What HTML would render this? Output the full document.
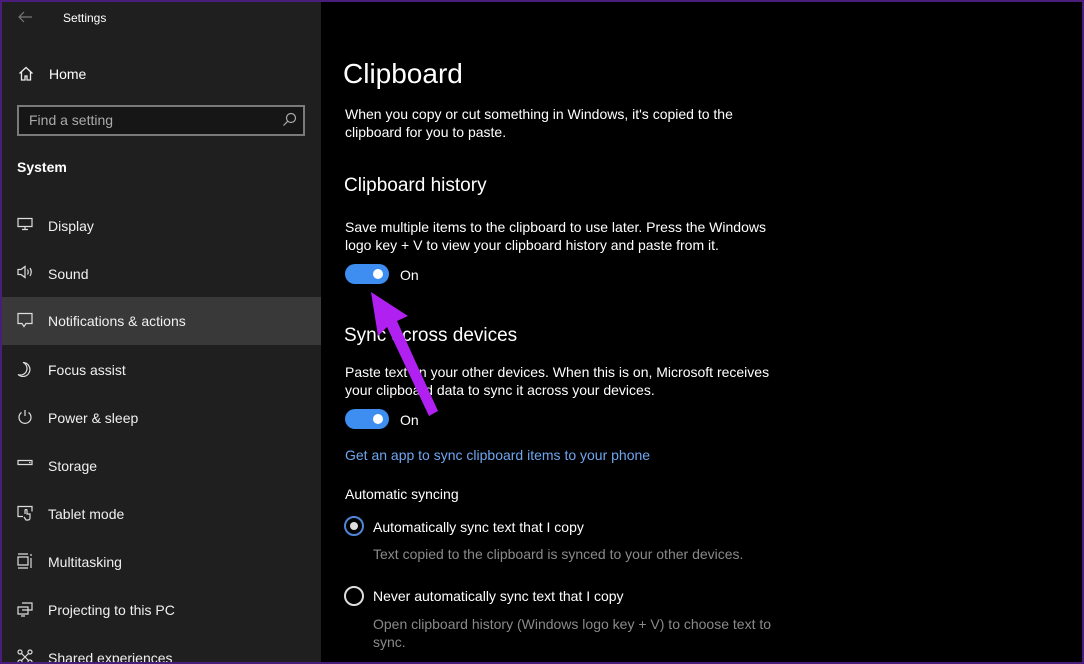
<!DOCTYPE html>
<html><head><meta charset="utf-8"><style>
*{margin:0;padding:0;box-sizing:border-box}
html,body{width:1084px;height:664px;overflow:hidden;background:#000}
body{font-family:"Liberation Sans",sans-serif;color:#fff;position:relative}
.frame{position:absolute;inset:0;border:2px solid #4b1d7a;z-index:10;pointer-events:none}
.side{position:absolute;left:0;top:0;width:321px;height:664px;background:#1f1f1f}
.t{position:absolute;white-space:nowrap}
.nav{position:absolute;left:0;width:321px;height:48px;font-size:14px;color:#f0f0f0}
.nav span{position:absolute;left:48px;top:16px}
.nav svg{position:absolute;left:17px;top:15px}
.sel{background:#393939}
.main .t{font-size:14px;line-height:18px;color:#fff}
.h1{font-size:28px!important;line-height:34px!important}
.h2{font-size:19px!important;line-height:24px!important}
.tog{position:absolute;width:44px;height:20px;border-radius:10px;background:#3d8ef0}
.tog:after{content:"";position:absolute;right:6px;top:5px;width:10px;height:10px;border-radius:50%;background:#fff}
.rad{position:absolute;width:20px;height:20px;border-radius:50%;border:2px solid #ddd}
</style></head><body>
<div class="side">
 <svg class="t" style="left:17px;top:10px" width="16" height="14" viewBox="0 0 16 14" fill="none" stroke="#777" stroke-width="1.2"><path d="M15 7H2M7 2L2 7l5 5"/></svg>
 <div class="t" style="left:63px;top:11px;font-size:12px">Settings</div>
 <svg class="t" style="left:18px;top:66px" width="16" height="15" viewBox="0 0 16 15" fill="none" stroke="#eee" stroke-width="1.3"><path d="M1.5 7.5L8 1.5l6.5 6M3.5 6v8h3.5v-4h2v4h3.5V6"/></svg>
 <div class="t" style="left:49px;top:66px;font-size:14px">Home</div>
 <div class="t" style="left:17px;top:105px;width:288px;height:31px;border:2px solid #7a7a7a;background:#161616"></div>
 <div class="t" style="left:29px;top:112px;font-size:14px;color:#aaa">Find a setting</div>
 <svg class="t" style="left:282px;top:112px" width="15" height="15" viewBox="0 0 15 15" fill="none" stroke="#aaa" stroke-width="1.2"><circle cx="9" cy="6" r="4.5"/><path d="M5.8 9.2L1.5 13.5"/></svg>
 <div class="t" style="left:17px;top:159px;font-size:14px;font-weight:bold">System</div>

 <div class="nav" style="top:202px"><svg width="16" height="14" fill="none" stroke="#ddd" stroke-width="1.2"><path d="M1 1.5h14v8H1zM8 9.5v3M5 12.5h6"/></svg><span>Display</span></div>
 <div class="nav" style="top:250px"><svg width="17" height="14" fill="none" stroke="#ddd" stroke-width="1.2"><path d="M1 4.5h3l4-3v11l-4-3H1zM10.5 4.5q1.5 2.5 0 5M13 3q2.5 4 0 8"/></svg><span>Sound</span></div>
 <div class="nav sel" style="top:297px"><svg width="16" height="16" fill="none" stroke="#ddd" stroke-width="1.2"><path d="M1 1.5h14v10H9l-2 3-2-3H1z"/></svg><span>Notifications &amp; actions</span></div>
 <div class="nav" style="top:346px"><svg width="16" height="16" fill="none" stroke="#ddd" stroke-width="1.2"><path d="M6 1.5a7 7 0 1 1-5 12A6.5 6.5 0 0 0 6 1.5z"/></svg><span>Focus assist</span></div>
 <div class="nav" style="top:394px"><svg width="16" height="16" fill="none" stroke="#ddd" stroke-width="1.2"><path d="M8 1v6M4.5 3.5a6 6 0 1 0 7 0"/></svg><span>Power &amp; sleep</span></div>
 <div class="nav" style="top:442px"><svg width="16" height="14" fill="none" stroke="#ddd" stroke-width="1.2"><path d="M1 3.5h14v4H1zM12 5.5h1.5"/></svg><span>Storage</span></div>
 <div class="nav" style="top:490px"><svg width="16" height="16" fill="none" stroke="#ddd" stroke-width="1.2"><path d="M6 11.5H1V1.5h14v5M8 9v-3.5a1 1 0 0 1 2 0V9h3v4a2 2 0 0 1-2 2H9l-2-3"/></svg><span>Tablet mode</span></div>
 <div class="nav" style="top:538px"><svg width="16" height="16" fill="none" stroke="#ddd" stroke-width="1.2"><path d="M1 1h10M1 15h10M1 4h10v8H1zM14 1v2M14 5v10"/></svg><span>Multitasking</span></div>
 <div class="nav" style="top:586px"><svg width="16" height="16" fill="none" stroke="#ddd" stroke-width="1.2"><path d="M5 2h10v7H5M1 6h10v7H1zM4 15h4"/></svg><span>Projecting to this PC</span></div>
 <div class="nav" style="top:634px"><svg width="16" height="16" fill="none" stroke="#ddd" stroke-width="1.2"><circle cx="3" cy="3" r="2"/><circle cx="13" cy="3" r="2"/><circle cx="3" cy="13" r="2"/><circle cx="13" cy="13" r="2"/><path d="M4.5 4.5l7 7M11.5 4.5l-7 7"/></svg><span>Shared experiences</span></div>
</div>

<div class="main">
 <div class="t h1" style="left:343px;top:57px">Clipboard</div>
 <div class="t" style="left:345px;top:105px">When you copy or cut something in Windows, it's copied to the<br>clipboard for you to paste.</div>
 <div class="t h2" style="left:344px;top:174px">Clipboard history</div>
 <div class="t" style="left:345px;top:218px">Save multiple items to the clipboard to use later. Press the Windows<br>logo key + V to view your clipboard history and paste from it.</div>
 <div class="tog" style="left:345px;top:264px"></div>
 <div class="t" style="left:400px;top:266px">On</div>
 <div class="t h2" style="left:344px;top:324px">Sync across devices</div>
 <div class="t" style="left:345px;top:363px">Paste text on your other devices. When this is on, Microsoft receives<br>your clipboard data to sync it across your devices.</div>
 <div class="tog" style="left:345px;top:409px"></div>
 <div class="t" style="left:400px;top:411px">On</div>
 <div class="t" style="left:345px;top:446px;color:#6ea6f0!important">Get an app to sync clipboard items to your phone</div>
 <div class="t" style="left:345px;top:485px">Automatic syncing</div>
 <div class="rad" style="left:344px;top:516px;border-color:#4f86d8"></div>
 <div class="t" style="left:350px;top:522px;width:8px;height:8px;border-radius:50%;background:#ddd"></div>
 <div class="t" style="left:373px;top:518px">Automatically sync text that I copy</div>
 <div class="t" style="left:373px;top:545px;color:#8a8a8a!important">Text copied to the clipboard is synced to your other devices.</div>
 <div class="rad" style="left:344px;top:586px"></div>
 <div class="t" style="left:373px;top:587px">Never automatically sync text that I copy</div>
 <div class="t" style="left:373px;top:615px;color:#8a8a8a!important">Open clipboard history (Windows logo key + V) to choose text to<br>sync.</div>
</div>

<svg class="t" style="left:0;top:0" width="1084" height="664"><path d="M371 292L378 336L387 327L429 416L438 411L397 321L408 316Z" fill="#b020f0"/></svg>
<div class="frame"></div>
</body></html>
